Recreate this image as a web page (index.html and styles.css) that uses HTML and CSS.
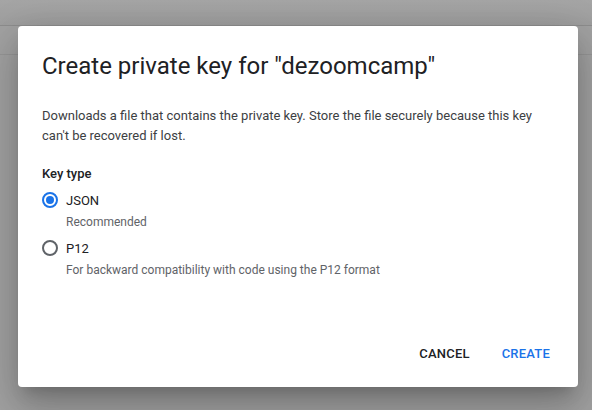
FILE: index.html
```html
<!DOCTYPE html>
<html>
<head>
<meta charset="utf-8">
<link rel="stylesheet" href="styles.css">
</head>
<body>
<div class="page">
  <div class="topbar"></div>
  <div class="row"></div>
</div>
<div class="overlay">
  <div class="dialog">
    <h1 class="title">Create private key for "dezoomcamp"</h1>
    <p class="desc">Downloads a file that contains the private key. Store the file securely because this key can't be recovered if lost.</p>
    <div class="label">Key type</div>
    <div class="options">
      <div class="option">
        <div class="choice"><span class="radio checked"></span><span class="opt-name">JSON</span></div>
        <div class="hint">Recommended</div>
      </div>
      <div class="option">
        <div class="choice"><span class="radio"></span><span class="opt-name">P12</span></div>
        <div class="hint">For backward compatibility with code using the P12 format</div>
      </div>
    </div>
    <div class="actions">
      <button class="btn">CANCEL</button>
      <button class="btn primary">CREATE</button>
    </div>
  </div>
</div>
</body>
</html>
```
FILE: styles.css
```css
html, body {
  margin: 0;
  padding: 0;
}
body {
  width: 592px;
  height: 410px;
  overflow: hidden;
  background: #a3a3a3;
  font-family: Roboto, "Liberation Sans", sans-serif;
  position: relative;
}
.page {
  height: 100%;
}
.topbar {
  height: 25px;
  background: linear-gradient(#a6a6a6, #9f9f9f);
  border-bottom: 1px solid #8e8e8e;
}
.row {
  height: 28px;
  border-bottom: 1px solid #979797;
}
.overlay {
  position: absolute;
  inset: 0;
}
.dialog {
  position: absolute;
  left: 18px;
  top: 26px;
  width: 560px;
  height: 361px;
  box-sizing: border-box;
  background: #fff;
  border-radius: 4px;
  box-shadow: 0 11px 15px -7px rgba(0,0,0,0.2), 0 24px 38px 3px rgba(0,0,0,0.14), 0 9px 46px 8px rgba(0,0,0,0.12);
  padding: 24px 24px 0 24px;
  display: flex;
  flex-direction: column;
}
.title {
  margin: 0;
  font-size: 24px;
  font-weight: 400;
  color: #202124;
  line-height: 32px;
}
.desc {
  margin: 24px 0 0 0;
  font-size: 13px;
  line-height: 20px;
  color: #3c4043;
}
.label {
  margin-top: 18px;
  font-size: 13px;
  font-weight: 500;
  color: #202124;
  line-height: 20px;
}
.options {
  margin-top: 6px;
  display: flex;
  flex-direction: column;
  gap: 6px;
}
.choice {
  display: flex;
  align-items: center;
  gap: 8px;
  height: 20px;
}
.radio {
  width: 12px;
  height: 12px;
  border: 2px solid #5f6368;
  border-radius: 50%;
  box-sizing: content-box;
  position: relative;
}
.radio.checked {
  border-color: #1a73e8;
}
.radio.checked::after {
  content: "";
  position: absolute;
  left: 2px;
  top: 2px;
  width: 8px;
  height: 8px;
  border-radius: 50%;
  background: #1a73e8;
}
.opt-name {
  font-size: 13px;
  color: #202124;
}
.hint {
  margin-left: 24px;
  margin-top: 2px;
  font-size: 12px;
  line-height: 20px;
  color: #5f6368;
}
.actions {
  margin-top: auto;
  margin-right: -8px;
  display: flex;
  justify-content: flex-end;
  gap: 8px;
  padding: 0 0 16px 0;
}
.btn {
  background: none;
  border: none;
  font-family: Roboto, "Liberation Sans", sans-serif;
  font-size: 13px;
  font-weight: 500;
  letter-spacing: 0.2px;
  color: #202124;
  padding: 0 12px;
  height: 36px;
}
.btn.primary {
  color: #1a73e8;
}
```
